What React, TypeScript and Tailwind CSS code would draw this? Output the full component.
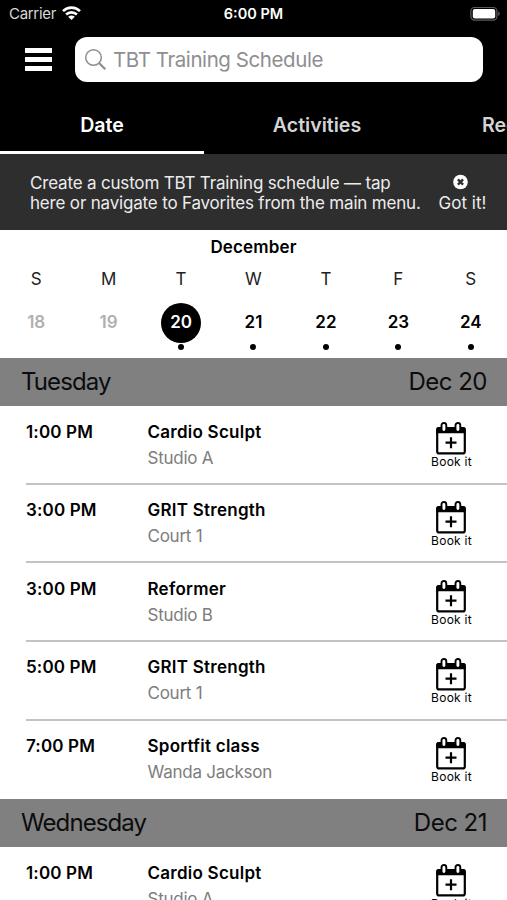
type Session = { time: string; title: string; place: string };

const days = [
  { letter: "S", date: 18, past: true },
  { letter: "M", date: 19, past: true },
  { letter: "T", date: 20, selected: true },
  { letter: "W", date: 21 },
  { letter: "T", date: 22 },
  { letter: "F", date: 23 },
  { letter: "S", date: 24 },
];

const tuesday: Session[] = [
  { time: "1:00 PM", title: "Cardio Sculpt", place: "Studio A" },
  { time: "3:00 PM", title: "GRIT Strength", place: "Court 1" },
  { time: "3:00 PM", title: "Reformer", place: "Studio B" },
  { time: "5:00 PM", title: "GRIT Strength", place: "Court 1" },
  { time: "7:00 PM", title: "Sportfit class", place: "Wanda Jackson" },
];

const wednesday: Session[] = [{ time: "1:00 PM", title: "Cardio Sculpt", place: "Studio A" }];

function WifiIcon() {
  return (
    <svg className="-mt-0.5" width="19" height="14" viewBox="0 0 19 14" fill="none" stroke="white" strokeWidth="2.6">
      <path d="M1 5.1 C5.8 0.4 13.2 0.4 18 5.1" />
      <path d="M4.1 8.5 C7.2 5.6 11.8 5.6 14.9 8.5" />
      <path d="M9.5 14 L6.2 10.8 C8 9.2 11 9.2 12.8 10.8 Z" fill="white" stroke="none" />
    </svg>
  );
}

function BatteryIcon() {
  return (
    <svg width="31" height="14" viewBox="0 0 31 14">
      <rect x="0.9" y="0.5" width="26" height="12.6" rx="3.6" fill="none" stroke="#5c5c5c" strokeWidth="1.2" />
      <rect x="2.8" y="2.1" width="22.4" height="9.4" rx="2" fill="white" />
      <path d="M28.1 4.6 C30.3 5.3 30.3 8.3 28.1 9 Z" fill="#5c5c5c" />
    </svg>
  );
}

function CalendarPlusIcon() {
  return (
    <svg width="30" height="33" viewBox="0 0 30 33">
      <rect x="1.2" y="6.2" width="27.6" height="25.2" rx="2" fill="white" stroke="black" strokeWidth="2.2" />
      <path d="M0.3 7.5 Q0.3 5 2.8 5 H27.2 Q29.7 5 29.7 7.5 V11.2 H0.3 Z" fill="black" />
      <rect x="5.5" y="1" width="4.8" height="8.9" rx="2.4" fill="white" stroke="black" strokeWidth="1.9" />
      <rect x="19.5" y="1" width="4.8" height="8.9" rx="2.4" fill="white" stroke="black" strokeWidth="1.9" />
      <path d="M15 15.2 V26.2 M9.5 20.7 H20.5" stroke="black" strokeWidth="2.2" />
    </svg>
  );
}

function DayHeader({ day, date }: { day: string; date: string }) {
  return (
    <div className="flex h-[48.3px] items-center justify-between bg-[#808080] pr-5 pl-[21px] text-2xl text-[#0c0c0c]">
      <span className="tracking-[-0.9px]">{day}</span>
      <span className="tracking-[-0.5px]">{date}</span>
    </div>
  );
}

function SessionRow({ session, last }: { session: Session; last: boolean }) {
  return (
    <div className="h-[78.6px] pl-[26px]">
      <div className={`flex h-full ${last ? "" : "border-b-2 border-[#c3c3c3]"}`}>
        <div className="w-[121.5px] pt-[13.4px] text-[17px] leading-6 font-semibold tracking-[0.15px]">{session.time}</div>
        <div className="flex-1 pt-[13.4px]">
          <div className="text-[17px] leading-6 font-semibold tracking-[0.25px]">{session.title}</div>
          <div className="mt-0.5 text-[17px] leading-6 tracking-[-0.25px] text-[#7d7d7d]">{session.place}</div>
        </div>
        <button type="button" className="flex w-[111px] flex-col items-center pt-[16.3px]">
          <span className="mr-[1.5px]">
            <CalendarPlusIcon />
          </span>
          <span className="text-xs leading-[13px] tracking-[0.25px]">Book it</span>
        </button>
      </div>
    </div>
  );
}

function SessionList({ sessions }: { sessions: Session[] }) {
  return (
    <>
      {sessions.map((session, i) => (
        <SessionRow key={i} session={session} last={i === sessions.length - 1} />
      ))}
    </>
  );
}

export default function App() {
  return (
    <div className="h-[900px] w-[507px] overflow-hidden bg-white font-['Inter',sans-serif] text-black">
      <header className="h-[154px] bg-black text-white">
        <div className="grid h-7 grid-cols-3 items-center pr-[6px] pl-[9px] text-[15px]">
          <div className="flex items-center gap-1.5 text-[#d8d8d8]">
            <span className="tracking-[-0.3px]">Carrier</span>
            <WifiIcon />
          </div>
          <span className="-ml-[3px] text-center text-[14.5px] font-semibold">6:00 PM</span>
          <div className="flex justify-end">
            <BatteryIcon />
          </div>
        </div>

        <div className="flex items-center pt-[9px] pl-[25px]">
          <div className="flex w-[27px] flex-col gap-1">
            <span className="h-[5px] bg-white" />
            <span className="h-[5px] bg-white" />
            <span className="h-[5px] bg-white" />
          </div>
          <div className="ml-[23px] flex h-[45px] w-[408px] items-center rounded-[12px] bg-white pl-[9px] text-[#8e8e93]">
            <svg width="23" height="23" viewBox="0 0 23 23" fill="none" stroke="currentColor">
              <circle cx="9.5" cy="9.5" r="7.8" strokeWidth="1.5" />
              <path d="M15 15 L21.3 21.3" strokeWidth="2.3" />
            </svg>
            <span className="ml-1.5 pt-0.5 text-[20.5px] tracking-[-0.42px]">TBT Training Schedule</span>
          </div>
        </div>

        <nav className="flex h-[72px] pt-[26px] text-[19.6px] font-semibold whitespace-nowrap">
          <div className="flex w-[204px] shrink-0 justify-center border-b-[3px] border-white leading-[35px]">Date</div>
          <div className="flex w-[226px] shrink-0 justify-center leading-[35px] text-[#d4d4d4]">Activities</div>
          <div className="flex shrink-0 pl-[52px] leading-[35px] text-[#d4d4d4]">Recently</div>
        </nav>
      </header>

      <div className="flex h-[75.5px] bg-[#2e2e2e] pt-[19px] pl-[30px] text-[17px] leading-5 text-[#ececec]">
        <p className="w-[406px] tracking-[-0.18px] whitespace-nowrap">
          Create a custom TBT Training schedule — tap
          <br />
          here or navigate to Favorites from the main menu.
        </p>
        <div className="flex w-[53px] flex-col items-center">
          <svg className="mr-[5px]" width="15" height="20" viewBox="0 0 15 20">
            <circle cx="7.5" cy="9" r="7.3" fill="white" />
            <path d="M4.9 6.4 L10.1 11.6 M10.1 6.4 L4.9 11.6" stroke="#2e2e2e" strokeWidth="2.3" />
          </svg>
          <span className="whitespace-nowrap">Got it!</span>
        </div>
      </div>

      <section className="h-[128.4px] pt-[5px]">
        <h2 className="text-center text-[17px] leading-6 font-semibold tracking-[0.15px]">December</h2>
        <div className="mt-2 grid grid-cols-7 text-[17px]">
          {days.map((day, i) => (
            <div key={i} className="flex flex-col items-center">
              <span className="leading-6 text-[#222222]">{day.letter}</span>
              <span
                className={`mt-3 flex size-10 items-center justify-center rounded-full pt-px font-semibold ${
                  day.selected ? "bg-black text-white" : day.past ? "text-[#b0b0b0]" : "text-black"
                }`}
              >
                {day.date}
              </span>
              {!day.past && <span className="mt-px size-1.5 rounded-full bg-black" />}
            </div>
          ))}
        </div>
      </section>

      <DayHeader day="Tuesday" date="Dec 20" />
      <SessionList sessions={tuesday} />
      <DayHeader day="Wednesday" date="Dec 21" />
      <SessionList sessions={wednesday} />
    </div>
  );
}
